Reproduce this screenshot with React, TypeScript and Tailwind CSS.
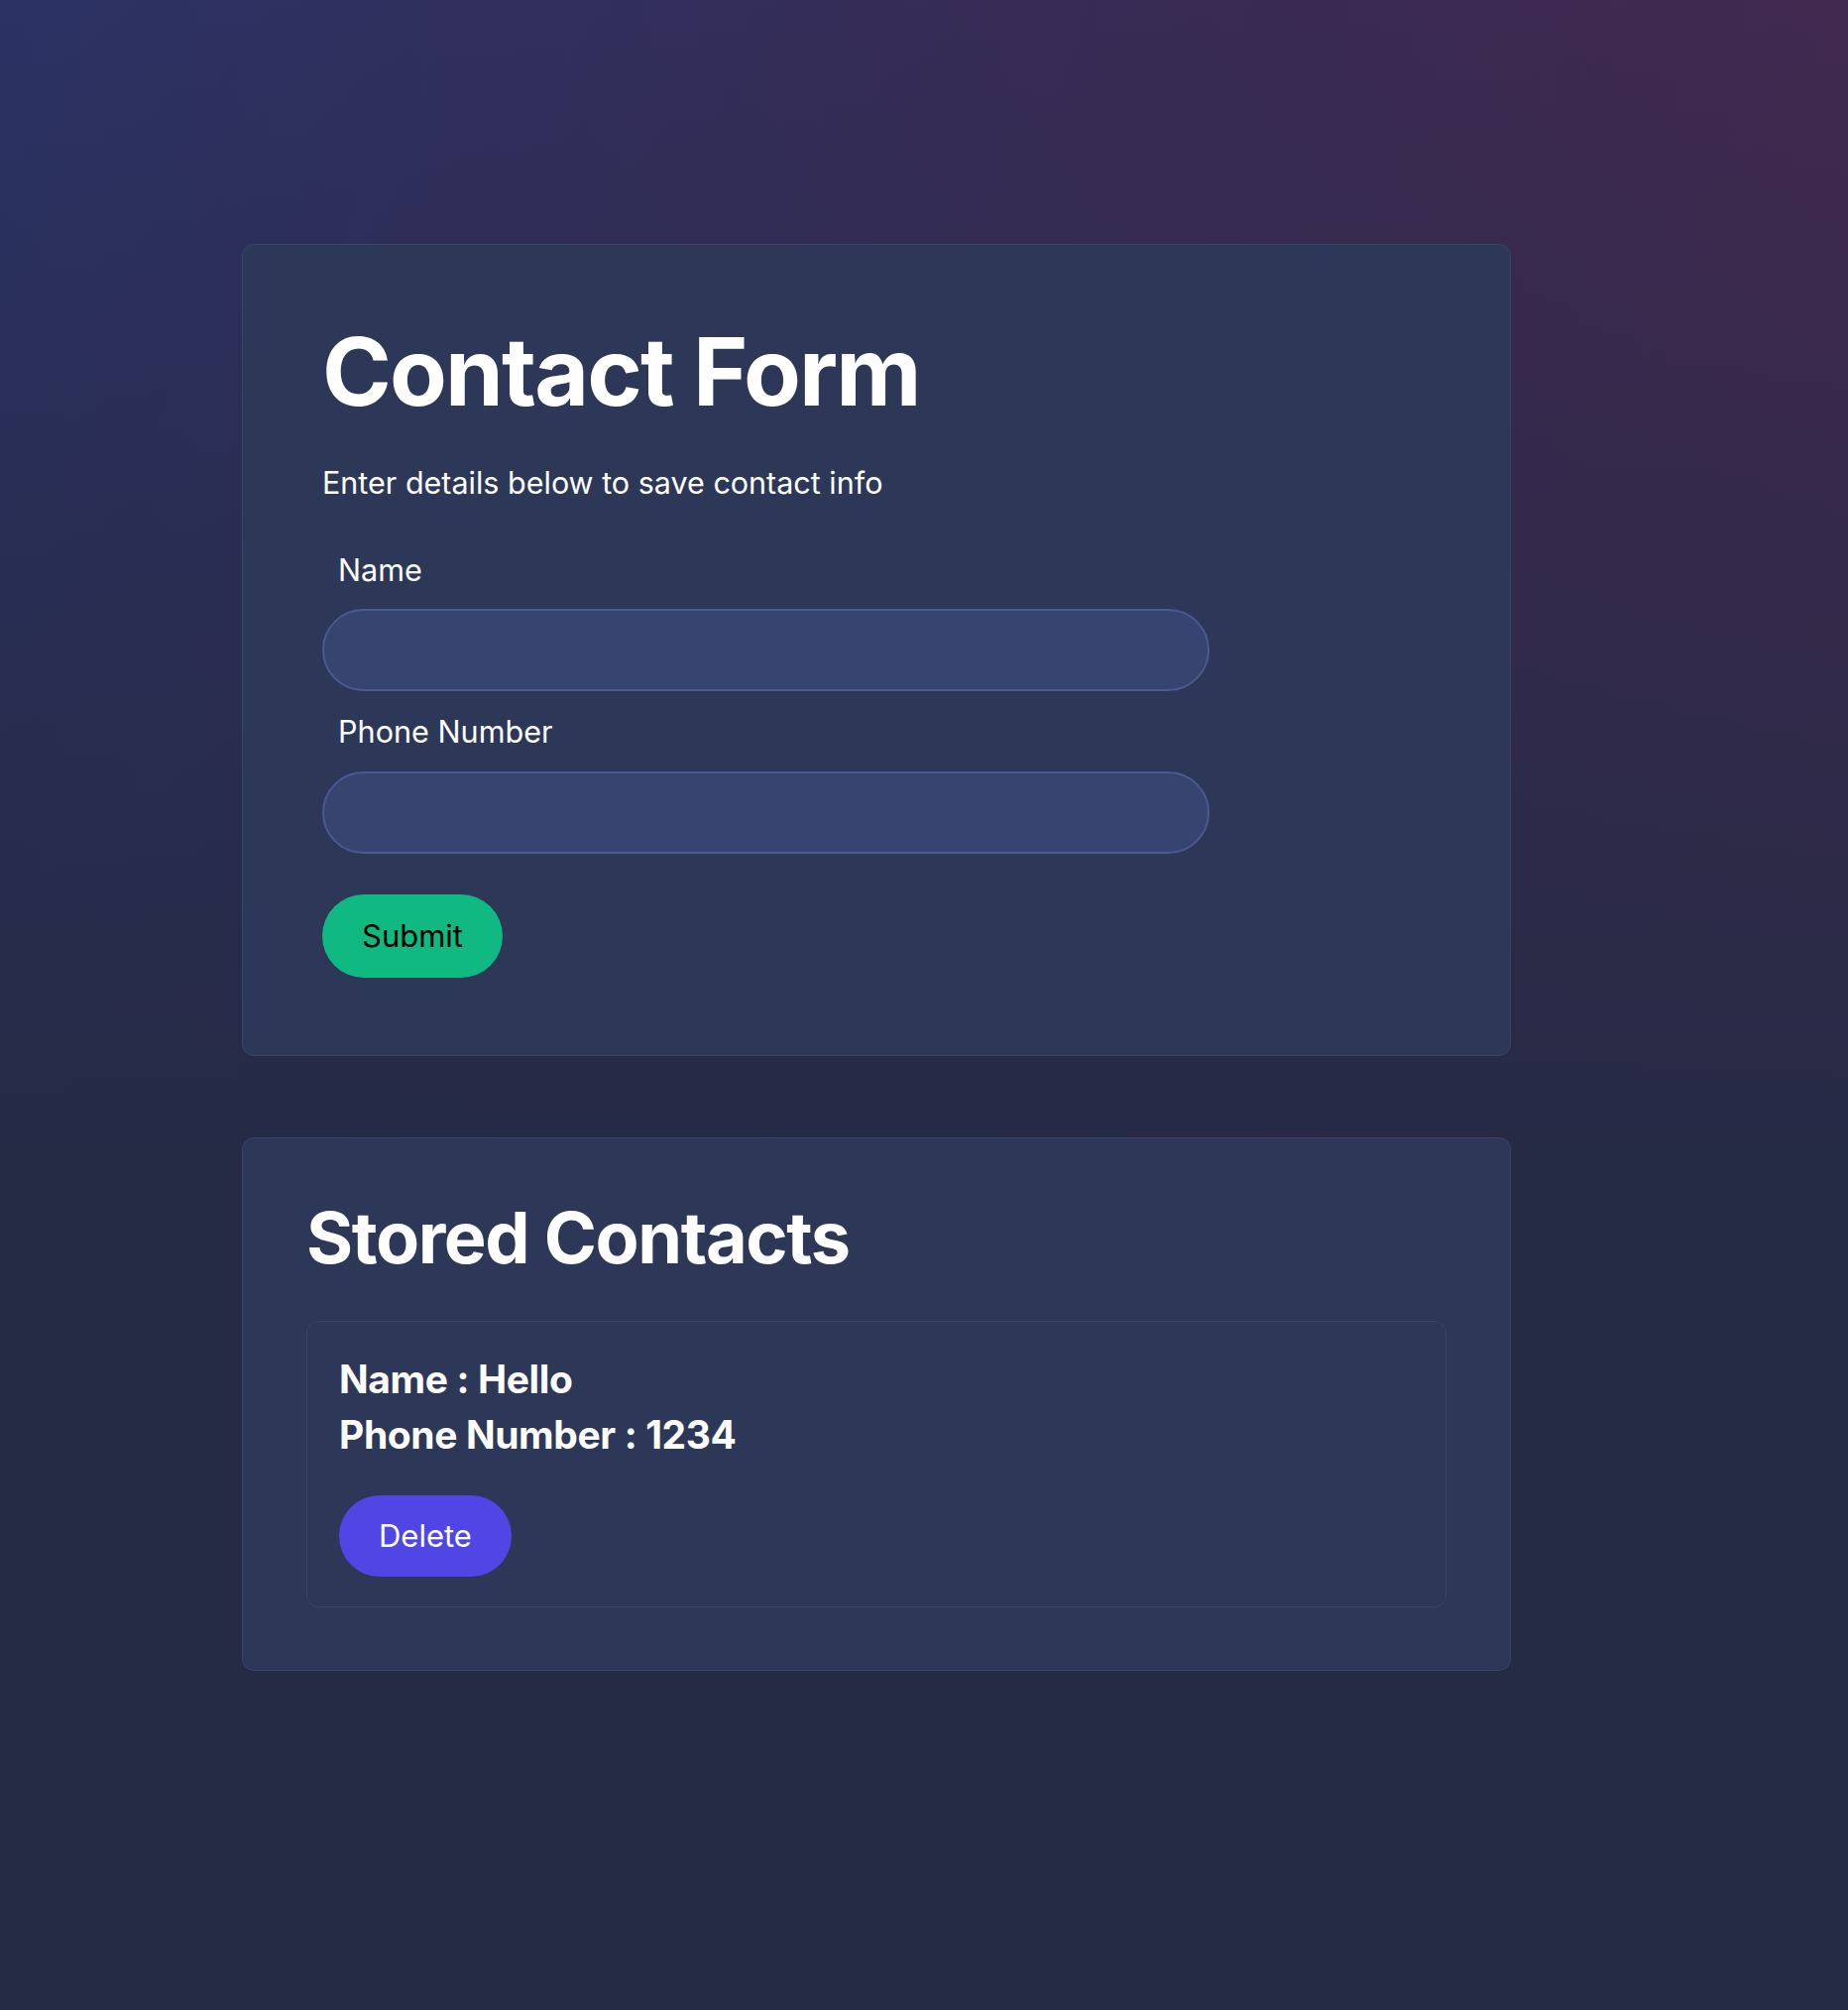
import { useState } from "react";

type Contact = { name: string; phone: string };

export default function App() {
  const [contacts, setContacts] = useState<Contact[]>([{ name: "Hello", phone: "1234" }]);
  const [name, setName] = useState("");
  const [phone, setPhone] = useState("");

  const submit = (e: React.FormEvent) => {
    e.preventDefault();
    if (!name || !phone) return;
    setContacts([...contacts, { name, phone }]);
    setName("");
    setPhone("");
  };

  return (
    <div className="min-h-screen font-['Inter',sans-serif] text-white bg-[#252a45] bg-[linear-gradient(to_bottom,transparent_0%,#252a45_58%),linear-gradient(100deg,#2b3264_0%,#3a2a52_60%,#47284f_100%)] pl-[244px] pt-[246px] pb-20">
      <div className="flex flex-col gap-[82px] w-[1280px]">
        {/* Form */}
        <form
          onSubmit={submit}
          className="bg-[#2d3757] border border-[#3a4468] rounded-xl px-20 pt-[80px] pb-[78px]"
        >
          <h1 className="text-[94.5px] leading-[95px] font-bold tracking-[-0.02em]">Contact Form</h1>
          <p className="mt-[47px] text-[30.5px] leading-[36px]">Enter details below to save contact info</p>

          <label className="block mt-[51px] pl-4 text-[30.6px] leading-[38px]">Name</label>
          <input
            value={name}
            onChange={(e) => setName(e.target.value)}
            className="block mt-[20px] w-[895px] h-[83px] rounded-full bg-[#37446f] border-2 border-[#4a5a92] px-6 text-[28px] outline-none"
          />

          <label className="block mt-[22px] pl-4 text-[30.6px] leading-[38px]">Phone Number</label>
          <input
            value={phone}
            onChange={(e) => setPhone(e.target.value)}
            className="block mt-[21px] w-[895px] h-[83px] rounded-full bg-[#37446f] border-2 border-[#4a5a92] px-6 text-[28px] outline-none"
          />

          <button
            type="submit"
            className="block mt-[41px] h-[84px] px-10 rounded-full bg-[#10b981] text-black text-[31px]"
          >
            Submit
          </button>
        </form>

        {/* Contacts */}
        <section className="bg-[#2d3757] border border-[#3a4468] rounded-xl px-16 pt-[64px] pb-[63px]">
          <h2 className="text-[72px] leading-none font-bold tracking-[-0.02em]">Stored Contacts</h2>
          <div className="mt-[48px] flex flex-col gap-4">
            {contacts.map((c, i) => (
              <div key={i} className="border border-[#3a4468] rounded-xl px-8 pt-[30px] pb-[30px]">
                <p className="text-[39px] leading-[56px] font-bold tracking-[-0.01em]">Name : {c.name}</p>
                <p className="text-[39px] leading-[56px] font-bold tracking-[-0.01em]">Phone Number : {c.phone}</p>
                <button
                  onClick={() => setContacts(contacts.filter((_, j) => j !== i))}
                  className="block mt-[33px] h-[82px] px-10 rounded-full bg-[#4f46e5] text-white text-[31px]"
                >
                  Delete
                </button>
              </div>
            ))}
          </div>
        </section>
      </div>
    </div>
  );
}
